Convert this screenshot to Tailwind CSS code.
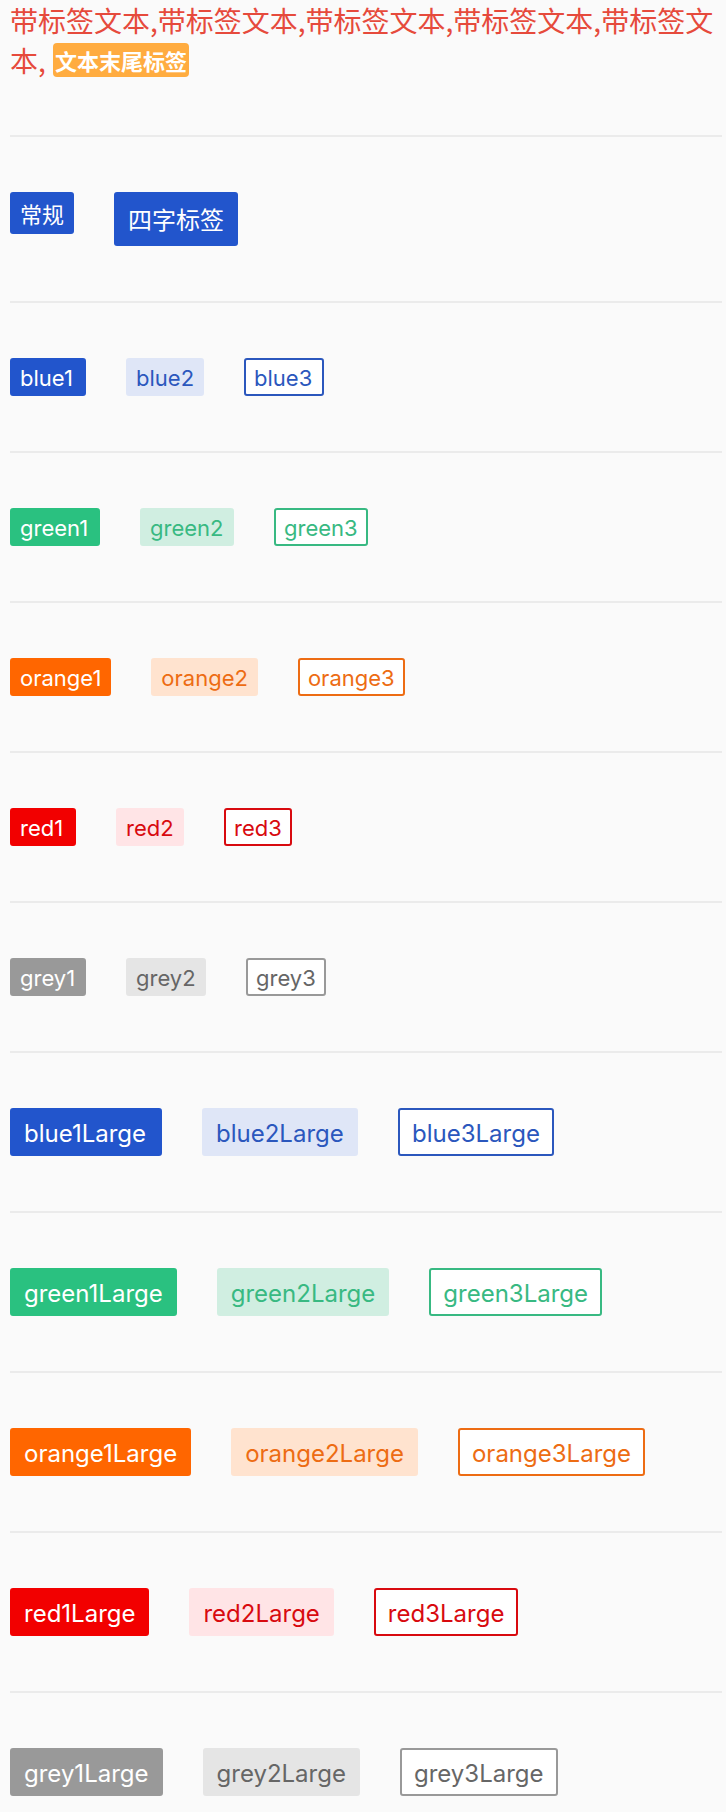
<!DOCTYPE html>
<html lang="zh-CN">
<head>
<meta charset="utf-8">
<meta name="viewport" content="width=device-width, initial-scale=1">
<title>Tag</title>
<script src="https://cdn.jsdelivr.net/npm/@tailwindcss/browser@4"></script>
</head>
<body class="bg-[#fafafa] pl-[10px] pr-1 font-['Inter','Noto_Sans_CJK_SC',sans-serif]">
<main class="divide-y-2 divide-[#ebebeb]">
  <p class="pb-[55px] font-['Noto_Sans_CJK_SC',sans-serif] text-[28px] leading-[40px] text-[#e64a3c]">带标签文本,带标签文本,带标签文本,带标签文本,带标签文本, <span class="mt-[3px] ml-px inline-block rounded bg-[#ffac40] px-[2px] align-top text-[22px] leading-[34px] font-bold text-white">文本末尾标签</span></p>
  <div class="flex items-start gap-10 py-[55px] font-['Noto_Sans_CJK_SC',sans-serif] text-white">
    <span class="rounded-[3px] bg-[#2255cc] px-[10px] py-1 text-[22px] leading-[34px]">常规</span>
    <span class="rounded-[3px] bg-[#2255cc] px-[14px] py-1 text-[24px] leading-[46px]">四字标签</span>
  </div>
  <div class="flex items-start gap-10 py-[55px] text-[22px] leading-[32px]">
    <span class="min-w-[76px] rounded-[3px] border-2 border-[#2255cc] bg-[#2255cc] px-2 pt-[2px] text-white">blue1</span>
    <span class="min-w-[78px] rounded-[3px] border-2 border-[#dfe6f7] bg-[#dfe6f7] px-2 pt-[2px] text-[#2b57bd]">blue2</span>
    <span class="min-w-[80px] rounded-[3px] border-2 border-[#2b57bd] bg-white px-2 pt-[2px] text-[#2b57bd]">blue3</span>
  </div>
  <div class="flex items-start gap-10 py-[55px] text-[22px] leading-[32px]">
    <span class="min-w-[90px] rounded-[3px] border-2 border-[#2ac180] bg-[#2ac180] px-2 pt-[2px] text-white">green1</span>
    <span class="min-w-[94px] rounded-[3px] border-2 border-[#d0eee1] bg-[#d0eee1] px-2 pt-[2px] text-[#38b982]">green2</span>
    <span class="min-w-[94px] rounded-[3px] border-2 border-[#38b982] bg-white px-2 pt-[2px] text-[#38b982]">green3</span>
  </div>
  <div class="flex items-start gap-10 py-[55px] text-[22px] leading-[32px]">
    <span class="rounded-[3px] border-2 border-[#ff6600] bg-[#ff6600] px-2 pt-[2px] text-white">orange1</span>
    <span class="rounded-[3px] border-2 border-[#ffe3cf] bg-[#ffe3cf] px-2 pt-[2px] text-[#ed6c13]">orange2</span>
    <span class="rounded-[3px] border-2 border-[#ed6c13] bg-white px-2 pt-[2px] text-[#ed6c13]">orange3</span>
  </div>
  <div class="flex items-start gap-10 py-[55px] text-[22px] leading-[32px]">
    <span class="min-w-[66px] rounded-[3px] border-2 border-[#f20000] bg-[#f20000] px-2 pt-[2px] text-white">red1</span>
    <span class="min-w-[68px] rounded-[3px] border-2 border-[#ffe4e6] bg-[#ffe4e6] px-2 pt-[2px] text-[#d80a0f]">red2</span>
    <span class="min-w-[68px] rounded-[3px] border-2 border-[#d80a0f] bg-white px-2 pt-[2px] text-[#d80a0f]">red3</span>
  </div>
  <div class="flex items-start gap-10 py-[55px] text-[22px] leading-[32px]">
    <span class="min-w-[76px] rounded-[3px] border-2 border-[#999999] bg-[#999999] px-2 pt-[2px] text-white">grey1</span>
    <span class="min-w-[80px] rounded-[3px] border-2 border-[#e5e5e5] bg-[#e5e5e5] px-2 pt-[2px] text-[#666666]">grey2</span>
    <span class="min-w-[80px] rounded-[3px] border-2 border-[#999999] bg-white px-2 pt-[2px] text-[#666666]">grey3</span>
  </div>
  <div class="flex items-start gap-10 py-[55px] text-[24px] leading-[40px]">
    <span class="min-w-[152px] rounded-[3px] border-2 border-[#2255cc] bg-[#2255cc] px-3 pt-1 text-white">blue1Large</span>
    <span class="min-w-[156px] rounded-[3px] border-2 border-[#dfe6f7] bg-[#dfe6f7] px-3 pt-1 text-[#2b57bd]">blue2Large</span>
    <span class="min-w-[156px] rounded-[3px] border-2 border-[#2b57bd] bg-white px-3 pt-1 text-[#2b57bd]">blue3Large</span>
  </div>
  <div class="flex items-start gap-10 py-[55px] text-[24px] leading-[40px]">
    <span class="rounded-[3px] border-2 border-[#2ac180] bg-[#2ac180] px-3 pt-1 text-white">green1Large</span>
    <span class="rounded-[3px] border-2 border-[#d0eee1] bg-[#d0eee1] px-3 pt-1 text-[#38b982]">green2Large</span>
    <span class="rounded-[3px] border-2 border-[#38b982] bg-white px-3 pt-1 text-[#38b982]">green3Large</span>
  </div>
  <div class="flex items-start gap-10 py-[55px] text-[24px] leading-[40px]">
    <span class="rounded-[3px] border-2 border-[#ff6600] bg-[#ff6600] px-3 pt-1 text-white">orange1Large</span>
    <span class="rounded-[3px] border-2 border-[#ffe3cf] bg-[#ffe3cf] px-3 pt-1 text-[#ed6c13]">orange2Large</span>
    <span class="rounded-[3px] border-2 border-[#ed6c13] bg-white px-3 pt-1 text-[#ed6c13]">orange3Large</span>
  </div>
  <div class="flex items-start gap-10 py-[55px] text-[24px] leading-[40px]">
    <span class="rounded-[3px] border-2 border-[#f20000] bg-[#f20000] px-3 pt-1 text-white">red1Large</span>
    <span class="rounded-[3px] border-2 border-[#ffe4e6] bg-[#ffe4e6] px-3 pt-1 text-[#d80a0f]">red2Large</span>
    <span class="rounded-[3px] border-2 border-[#d80a0f] bg-white px-3 pt-1 text-[#d80a0f]">red3Large</span>
  </div>
  <div class="flex items-start gap-10 pt-[55px] pb-4 text-[24px] leading-[40px]">
    <span class="rounded-[3px] border-2 border-[#999999] bg-[#999999] px-3 pt-1 text-white">grey1Large</span>
    <span class="rounded-[3px] border-2 border-[#e5e5e5] bg-[#e5e5e5] px-3 pt-1 text-[#666666]">grey2Large</span>
    <span class="rounded-[3px] border-2 border-[#999999] bg-white px-3 pt-1 text-[#666666]">grey3Large</span>
  </div>
</main>
</body>
</html>
